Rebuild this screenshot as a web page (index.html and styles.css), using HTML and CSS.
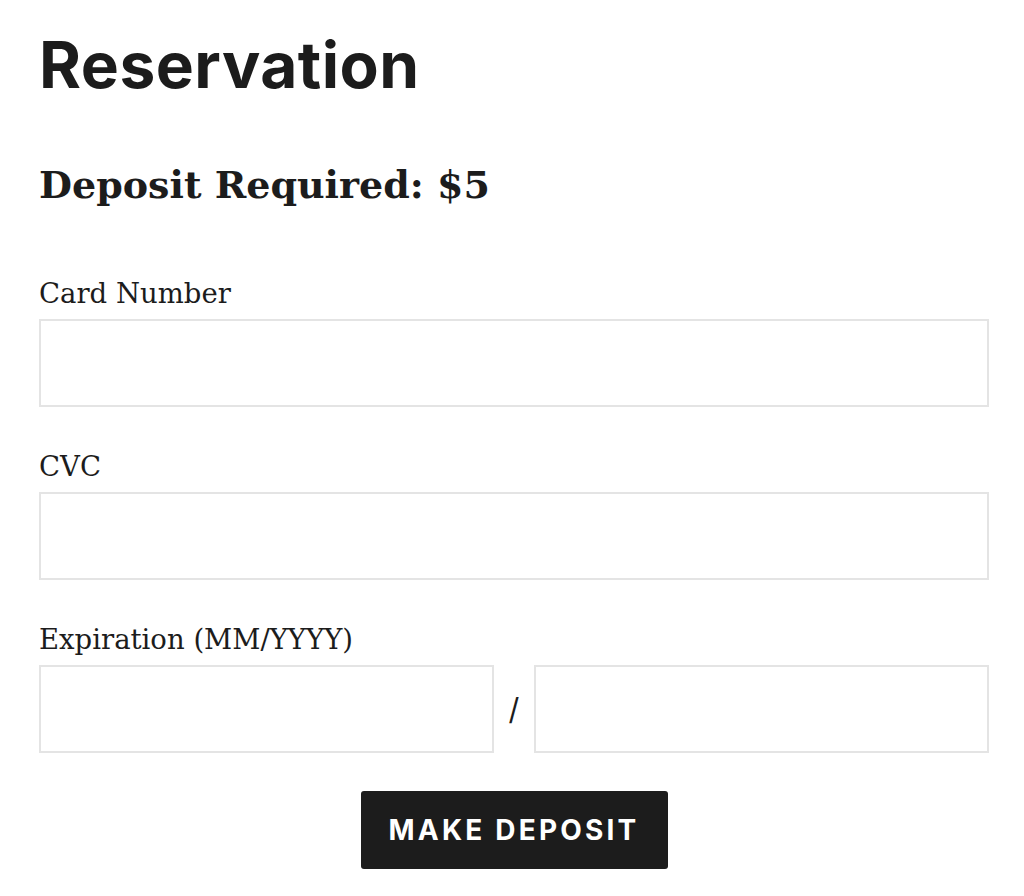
FILE: index.html
```html
<!DOCTYPE html>
<html lang="en">
<head>
<meta charset="utf-8">
<title>Reservation</title>
<link rel="stylesheet" href="styles.css">
</head>
<body>
<main class="page">
  <h1 class="title">Reservation</h1>
  <h2 class="deposit">Deposit Required: $5</h2>
  <form class="form">
    <div class="field">
      <label class="label" for="card">Card Number</label>
      <input class="input" id="card" type="text">
    </div>
    <div class="field">
      <label class="label" for="cvc">CVC</label>
      <input class="input" id="cvc" type="text">
    </div>
    <div class="field">
      <label class="label" for="month">Expiration (MM/YYYY)</label>
      <div class="exp-row">
        <input class="input" id="month" type="text">
        <span class="slash">/</span>
        <input class="input" id="year" type="text">
      </div>
    </div>
    <div class="actions">
      <button class="button" type="button">Make Deposit</button>
    </div>
  </form>
</main>
</body>
</html>
```

FILE: styles.css
```css
html, body {
  margin: 0;
  padding: 0;
  background: #ffffff;
  color: #1c1c1c;
}

.page {
  width: 950px;
  padding: 0 0 0 39px;
}

.title {
  margin: 0;
  padding-top: 25px;
  font-family: Inter, "DejaVu Sans", sans-serif;
  font-weight: 700;
  font-size: 64px;
  line-height: 80px;
  letter-spacing: 0.5px;
}

.deposit {
  margin: 56px 0 0;
  font-family: "DejaVu Serif", serif;
  font-weight: 700;
  font-size: 38px;
  line-height: 48px;
}

.form {
  margin-top: 64px;
}

.field {
  margin-bottom: 39px;
}

.label {
  display: block;
  font-family: "DejaVu Serif", serif;
  font-size: 27.5px;
  line-height: 40px;
  margin-bottom: 6px;
}

.input {
  display: block;
  box-sizing: border-box;
  width: 100%;
  height: 88px;
  margin: 0;
  border: 2px solid #e4e4e4;
  background: #fff;
  outline: none;
}

.exp-row {
  display: flex;
  align-items: center;
}

.exp-row .input {
  flex: 1;
  width: auto;
  min-width: 0;
}

.slash {
  width: 40px;
  text-align: center;
  font-family: Inter, "DejaVu Sans", sans-serif;
  font-size: 30px;
  color: #1c1c1c;
}

.actions {
  display: flex;
  justify-content: center;
  margin-top: -1px;
}

.button {
  width: 307px;
  height: 78px;
  border: none;
  border-radius: 3px;
  background: #1c1c1c;
  color: #fff;
  font-family: Inter, "DejaVu Sans", sans-serif;
  font-weight: 700;
  font-size: 28px;
  letter-spacing: 3.2px;
  text-transform: uppercase;
  cursor: pointer;
}
```
